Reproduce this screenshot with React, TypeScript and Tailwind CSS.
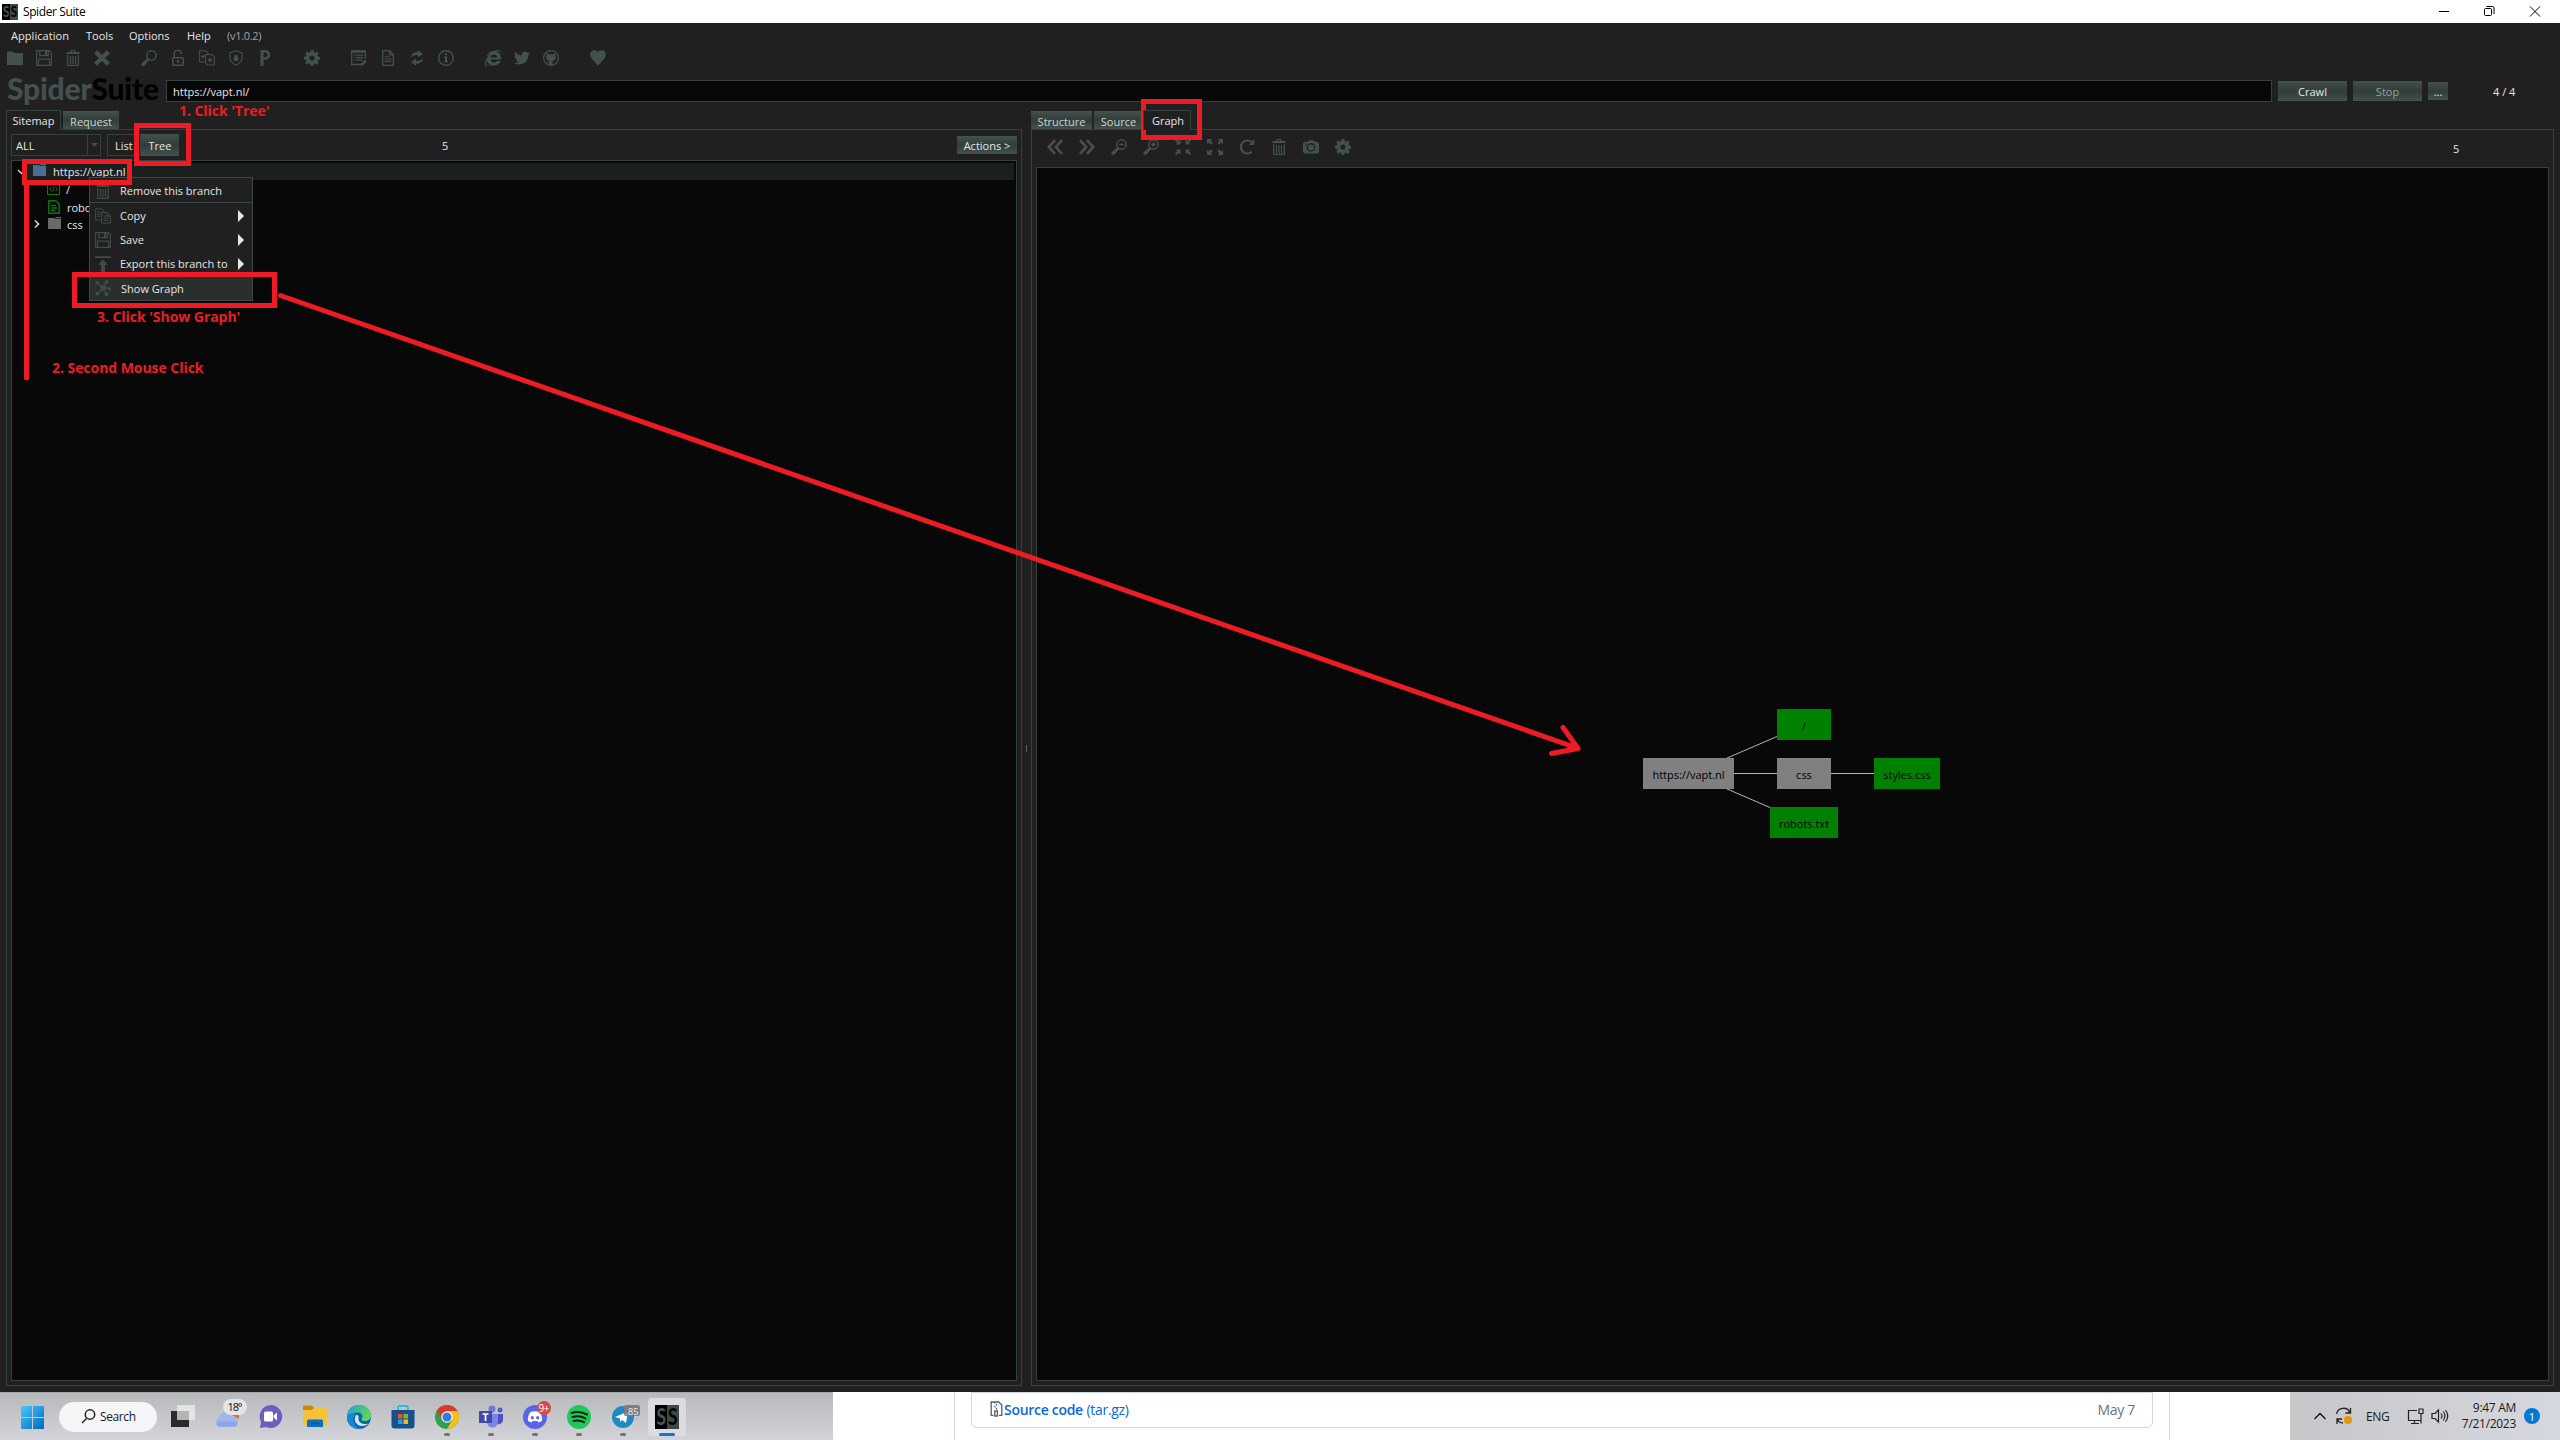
import React from "react";
import { FaInternetExplorer, FaTwitter } from "react-icons/fa";

type Kids = { children?: React.ReactNode };

function I({ children, s = 16, vb = "0 0 16 16", c = "" }: Kids & { s?: number; vb?: string; c?: string }) {
  return (
    <svg width={s} height={s} viewBox={vb} className={`block shrink-0 ${c}`} fill="currentColor">
      {children}
    </svg>
  );
}

const Folder = () => <I><path d="M0 1.500h6l1 1.500h9v12H0z" /></I>;
const Save = () => (
  <I>
    <path d="M.6.6h12.900l1.900 1.900v12.900H.6zM3.800.6v5h8.500v-5M2.500 15.400V9.200h11v6.200" fill="none" stroke="currentColor" strokeWidth="1.200" />
    <path d="M9 1h2.300v4H9z" />
  </I>
);
const Trash = () => (
  <I>
    <path fillRule="evenodd" d="M5 2l1-2h4l1 2h3.500v2h-13V2zM6.300 2h3.400l-.5-1H6.800z" />
    <path d="M2.700 5v10.400h10.600V5M5.500 6v8M8 6v8M10.500 6v8" fill="none" stroke="currentColor" strokeWidth="1.200" />
  </I>
);
const Cross = () => <I><path d="M3.200.3 8 5l4.800-4.700L16 3.200 11 8l5 4.800-3.200 3L8 11l-4.800 4.800L0 12.800 5 8 0 3.200z" /></I>;
const Zoomer = ({ k = "" }: { k?: string }) => (
  <I>
    <circle cx="10.500" cy="5.500" r="4.700" fill="none" stroke="currentColor" strokeWidth="1.400" />
    <path d="M6.500 8 0 14l1.500 2 2-.5L8.500 9.800z" />
    {k !== "" && <path d="M8.200 5.500h4.600" stroke="currentColor" strokeWidth="1.600" />}
    {k === "+" && <path d="M10.500 3.200v4.600" stroke="currentColor" strokeWidth="1.600" />}
  </I>
);
const Lock = () => (
  <I>
    <path d="M4.200 7.500V4a3.600 3.600 0 0 1 7.200-.3" fill="none" stroke="currentColor" strokeWidth="1.700" />
    <rect x="2.800" y="7.700" width="10.400" height="7.500" rx="1" fill="none" stroke="currentColor" strokeWidth="1.600" />
    <rect x="7" y="10" width="2" height="3" />
  </I>
);
const CopyPlus = () => (
  <I>
    <path d="M5.500 12H.6V.8h6.200L9 3.200v2M6.500 4.500V13l2 2h6.900V7l-2.600-2.500z" fill="none" stroke="currentColor" strokeWidth="1.100" />
    <path d="M2.200 6.500h3.500M4 4.700v3.600M8.800 10h4.400M11 7.800v4.400" stroke="currentColor" strokeWidth="1.300" />
  </I>
);
const CopyDoc = () => (
  <I>
    <path d="M5.500 12H.6V.8h6.200L9 3.200v2M6.500 4.500V15h8.900V7.500l-2.600-3zM2.200 4h3M2.200 6.200h3M2.200 8.400h3M8.500 8h3M8.500 10.200h5M8.500 12.400h5M12 4.500V8h3" fill="none" stroke="currentColor" strokeWidth="1" />
  </I>
);
const Shield = () => (
  <I>
    <path d="M8 .8 14 3v4.500c0 3.500-2.500 6-6 7.700-3.500-1.700-6-4.200-6-7.700V3z" fill="none" stroke="currentColor" strokeWidth="1.200" />
    <path d="M5.800 7h4.400v4H5.800zM6.300 7V5.500q1.700-2 3.400 0V7z" />
  </I>
);
const PIcon = () => <I><path fillRule="evenodd" d="M3.500 0h5a4.700 4.700 0 0 1 0 9.700h-2V16h-3zM6.500 2.500v4.700h1.800a2.300 2.300 0 0 0 0-4.700z" /></I>;
const Gear = () => (
  <I>
    <path fillRule="evenodd" d="M6.600 0h2.800l.4 2.200 1.300.5L12.900 1.400l1.800 1.900-1.200 1.800.5 1.300 2 .4v2.600l-2.100.5-.5 1.200 1.200 1.800-1.900 1.900-1.800-1.200-1.300.5L9.400 16H6.600l-.4-2-1.300-.5-1.800 1.200-1.900-1.900 1.200-1.800-.5-1.200L0 9.400V6.700l2-.4.5-1.300L1.300 3.300l1.900-1.900 1.700 1.300 1.300-.5zM8 5.400a2.600 2.600 0 1 0 0 5.200 2.600 2.600 0 0 0 0-5.200z" />
  </I>
);
const ListEdit = () => (
  <I>
    <path d="M10 14.500H.7V.8h13.600v8" fill="none" stroke="currentColor" strokeWidth="1.300" />
    <path d="M.5.5h14v2.200H.5zM2.800 4.500H4v1.200H2.800zM5 4.500h7.500v1.200H5zM2.800 7H4v1.200H2.800zM5 7h7.500v1.200H5zM2.800 9.500H4v1.200H2.800zM5 9.500h6v1.200H5zM9.500 15.700l.6-2.400 3.800-3.800 2 2-3.900 3.700z" />
  </I>
);
const Doc = () => (
  <I>
    <path d="M2.700.7h7L13.400 4.600v10.700H2.700zM9.500.8v4h4" fill="none" stroke="currentColor" strokeWidth="1.300" strokeLinejoin="round" />
    <path d="M4.500 6.700h5M4.500 9h7M4.500 11.400h7" stroke="currentColor" strokeWidth="1.100" />
  </I>
);
const Swap = () => (
  <I>
    <path d="M2 7.500C2.200 4 5 2 9 2.300V.2l5 3.700-5 3.300V5.200C6 4.700 4 5.500 2 7.500zM14 8.500c-.2 3.500-3 5.500-7 5.200v2.100l-5-3.700 5-3.300v2c3 .5 5-.3 7-2.300z" />
  </I>
);
const Info = () => (
  <I>
    <circle cx="8" cy="8" r="7.300" fill="none" stroke="currentColor" strokeWidth="1.400" />
    <path d="M7 3.200h2v2H7zM6 6.500h3V11h1v1.300H6V11h1V7.800H6z" />
  </I>
);
const Github = () => (
  <I>
    <circle cx="8" cy="8" r="7.400" fill="none" stroke="currentColor" strokeWidth="1.200" />
    <path d="M3.800 3.200 6 4.300h4l2.200-1.100.4 2.500c1 3-.5 4.700-3 5v4.200H6.200v-2c-1.700.2-2-1.300-2.900-1.700 1.400-.2 1.500 1 2.900.7l.1-1.200C3.900 10.400 2.500 8.700 3.400 5.700z" />
  </I>
);
const Heart = () => <I><path d="M8 2.300C9-.3 13.300-.7 15 1.900c1.600 2.400.8 5-1.300 7.400L8 15.800 2.300 9.300C.2 6.900-.6 4.300 1 1.900 2.700-.7 7-.3 8 2.300z" /></I>;
const Chev = ({ flip = false }) => (
  <I c={flip ? "rotate-180" : ""}>
    <path d="M8 1.200 1.800 8 8 14.800M15 1.200 8.800 8l6.200 6.800" fill="none" stroke="currentColor" strokeWidth="2.600" />
  </I>
);
const Shrink = () => <I><path d="M5.500.5v5h-5l1.700-1.700L0 1.700 1.700 0l2.100 2.200zM10.500.5v5h5l-1.700-1.700L16 1.700 14.300 0l-2.100 2.200zM5.500 15.500v-5h-5l1.700 1.700L0 14.300 1.700 16l2.100-2.200zM10.500 15.500v-5h5l-1.700 1.700 2.200 2.100-1.700 1.700-2.100-2.200z" /></I>;
const Expand = () => <I><path d="M0 0h5.300L3.600 1.700l2.200 2.200-1.900 1.900-2.200-2.200L0 5.300zM16 0h-5.300l1.700 1.700-2.200 2.200 1.900 1.900 2.200-2.200L16 5.300zM0 16h5.300l-1.700-1.700 2.200-2.200-1.900-1.900-2.200 2.200L0 10.700zM16 16h-5.300l1.700-1.700-2.200-2.200 1.900-1.900 2.200 2.200 1.700-1.700z" /></I>;
const Reload = () => (
  <I>
    <path d="M12.800 12.700A6.500 6.500 0 1 1 12.500 3" fill="none" stroke="currentColor" strokeWidth="2.200" />
    <path d="M15.300.3v5.700H9.500z" />
  </I>
);
const Camera = () => (
  <I>
    <path fillRule="evenodd" d="M1.500 3h3L6 1.200h4.500L12 3h2.500L16 4.500V13l-1.500 1.500h-13L0 13V4.500zM8 4a4.400 4.400 0 1 0 0 8.800A4.400 4.400 0 0 0 8 4zM2 4.500v1.300h1.500V4.500z" />
    <circle cx="8" cy="8.400" r="3" />
  </I>
);
const ExportUp = () => <I><path d="M0 .2h16v1.800H0zM8 3.500l5 5.300h-3V16H6V8.800H3z" /></I>;
const GraphI = () => (
  <I>
    <path d="M8 8 2.500 3M8 8l3-6M8 8H15M8 8l-5 5.500M8 8l4 6" stroke="currentColor" strokeWidth="1.200" />
    <circle cx="8" cy="8" r="3" /><circle cx="2.200" cy="2.600" r="1.900" /><circle cx="11.500" cy="2" r="1.900" />
    <circle cx="14.300" cy="9" r="1.700" /><circle cx="2.400" cy="13.500" r="1.900" /><circle cx="11.500" cy="14" r="2" />
  </I>
);

const grad = "bg-linear-to-b from-[#44524e] via-[#303d39] to-[#44524e]";

function SSLogo({ s }: { s: number }) {
  return (
    <svg width={s} height={s} viewBox="0 0 24 24" className="block shrink-0 overflow-visible">
      <path d="M0 0h12v24H0z" fill="#000" />
      <path d="M12 0h12v24H12z" fill="#3c4846" />
      <text x="6.300" y="20" textAnchor="middle" fontFamily="Lato" fontWeight="700" fontSize="22" textLength="9.500" lengthAdjust="spacingAndGlyphs" fill="#4a5754">S</text>
      <text x="17.700" y="20" textAnchor="middle" fontFamily="Lato" fontWeight="700" fontSize="22" textLength="9.500" lengthAdjust="spacingAndGlyphs" fill="#000">S</text>
    </svg>
  );
}

function TitleBar() {
  return (
    <div className="flex h-[23px] items-center bg-white pl-[2px] text-black">
      <SSLogo s={16} />
      <span className="ml-[5px] flex-1 text-[12px] tracking-[-0.400px]">Spider Suite</span>
      <svg width="110" height="20" viewBox="0 0 110 20" fill="none" stroke="#000" className="mr-[12px]">
        <path d="M1 9.500h10" />
        <rect x="46.500" y="6.500" width="7" height="7" rx="1" />
        <path d="M48.500 4.500h6q1.500 0 1.500 1.500v6" />
        <path d="M92 4.500l10 10M102 4.500l-10 10" />
      </svg>
    </div>
  );
}

function MenuRow() {
  return (
    <div className="flex h-[27px] items-center pb-[2px] pl-[11px] text-[#e6e6e6]">
      <span className="w-[75px] tracking-[0.050px]">Application</span>
      <span className="w-[43px]">Tools</span>
      <span className="w-[58px]">Options</span>
      <span className="w-[40px]">Help</span>
      <span className="text-[#a0a4a8] tracking-[-0.300px]">(v1.0.2)</span>
    </div>
  );
}

function Toolbar() {
  return (
    <div className="flex h-4 gap-[31px] pl-[7px] text-[#43514e]">
      <div className="flex gap-[13px]"><Folder /><Save /><Trash /><Cross /></div>
      <div className="flex gap-[13px]"><Zoomer /><Lock /><CopyPlus /><Shield /><PIcon /></div>
      <Gear />
      <div className="flex gap-[13px]"><ListEdit /><Doc /><Swap /><Info /></div>
      <div className="flex gap-[13px]"><FaInternetExplorer size={16} /><FaTwitter size={16} /><Github /></div>
      <Heart />
    </div>
  );
}

function UrlRow() {
  return (
    <div className="mt-[6px] flex h-[38px] items-center pl-[7px]">
      <div className="h-[38px] w-[159px] whitespace-nowrap font-['Lato'] text-[30px] font-black leading-[33px] tracking-[-0.200px] text-[#43504d]">
        Spider<span className="text-black">Suite</span>
      </div>
      <div className="flex h-[22px] w-[2106px] items-center border border-[#34413e] bg-[#080808] pl-[6px]">https://vapt.nl/</div>
      <div className={`ml-[6px] flex h-5 w-[69px] items-center justify-center ${grad}`}>Crawl</div>
      <div className={`ml-[6px] flex h-5 w-[69px] items-center justify-center text-[#96a09e] ${grad}`}>Stop</div>
      <div className={`ml-[6px] flex h-[18px] w-5 items-center justify-center ${grad}`}>...</div>
      <span className="ml-[45px]">4 / 4</span>
    </div>
  );
}

function Tab({ children, on = false, c }: Kids & { on?: boolean; c: string }) {
  return on ? (
    <div className={`relative z-10 flex h-[20px] items-center justify-center border border-b-0 border-[#34413e] bg-[#202020] ${c}`}>{children}</div>
  ) : (
    <div className={`flex h-[18px] items-center justify-center pt-[2px] text-[#d0d4d3] ${grad} ${c}`}>{children}</div>
  );
}

function LeftPane() {
  return (
    <section className="ml-[6px] flex w-[1016px] flex-col">
      <div className="flex h-[19px] items-end">
        <Tab on c="-mb-px w-[55px]">Sitemap</Tab>
        <Tab c="ml-[2px] w-[56px]">Request</Tab>
      </div>
      <div className="flex flex-1 flex-col border border-[#34413e] px-1 pb-1 pt-1">
        <div className="flex h-[22px] items-center">
          <div className="flex h-[22px] w-[90px] border border-[#34413e]">
            <span className="flex flex-1 items-center pl-1">ALL</span>
            <span className="flex w-[13px] items-center justify-center border-l border-[#34413e]">
              <svg width="7" height="4"><path d="M0 0h7L3.500 4z" fill="#3c4c5c" /></svg>
            </span>
          </div>
          <div className="ml-[6px] flex h-[22px] w-[34px] items-center border border-[#34413e] pl-[7px]">List</div>
          <div className={`flex h-[22px] w-[38px] items-center justify-center ${grad}`}>Tree</div>
          <span className="ml-[263px] flex-1">5</span>
          <div className={`flex h-[18px] w-[60px] items-center justify-center ${grad}`}>Actions &gt;</div>
        </div>
        <div className="mt-1 flex-1 border border-[#34413e] bg-[#080808] p-[2px]">
          <div className="flex h-[17px] items-center">
            <svg width="14" height="17" className="shrink-0"><path d="M4 7l3.500 3.500L11 7" fill="none" stroke="#ddd" strokeWidth="1.300" /></svg>
            <div className="flex h-[17px] flex-1 items-center bg-[#1b1f1e] pl-[5px]">
              <svg width="14" height="12" className="-mt-[3px]"><path d="M0 1h6l1.500 1H13v10H0z" fill="#4b6f93" /><path d="M7 0h6v1.300H8z" fill="#4b6f93" /></svg>
              <span className="ml-[6px] tracking-[0.030px]">https://vapt.nl</span>
            </div>
          </div>
          <div className="flex h-[18px] items-center pl-[33px]">
            <svg width="13" height="12" fill="none" stroke="#0a7a0a"><path d="M.5.5h12v11H.5zM4.500 4 2.500 6l2 2M8.500 4l2 2-2 2M7.200 3.500 5.800 8.500" /></svg>
            <span className="ml-[6px]">/</span>
          </div>
          <div className="flex h-[18px] items-center pl-[34px]">
            <svg width="12" height="14" fill="none" stroke="#067806" strokeWidth="1.500"><path d="M.8.8h7L11.200 4v9.200H.8z" /><path d="M3 5.500h5M3 8h6M3 10.500h4" /></svg>
            <span className="ml-[7px]">robots.txt</span>
          </div>
          <div className="flex h-[16px] items-center pl-[19px]">
            <svg width="8" height="10"><path d="M2 1.500 5.500 5 2 8.500" fill="none" stroke="#ddd" strokeWidth="1.500" /></svg>
            <svg width="14" height="12" className="-mt-[2px] ml-[7px]"><path d="M0 1h6l1.500 1H13v10H0z" fill="#6a6a6a" /><path d="M7 0h6v1.300H8z" fill="#6a6a6a" /></svg>
            <span className="ml-[5px]">css</span>
          </div>
        </div>
      </div>
    </section>
  );
}

function Node({ children, c }: Kids & { c: string }) {
  return <div className={`absolute flex h-[31px] items-center justify-center whitespace-nowrap pt-px text-black ${c}`}>{children}</div>;
}

function RightPane() {
  return (
    <section className="flex w-[1523px] flex-col">
      <div className="flex h-[19px] items-end">
        <Tab c="w-[61px]">Structure</Tab>
        <Tab c="ml-[2px] w-[49px]">Source</Tab>
        <Tab on c="-mb-px w-[48px] pl-[2px]">Graph</Tab>
      </div>
      <div className="flex flex-1 flex-col border border-[#34413e] p-1">
        <div className="flex h-[33px] items-start pl-[11px] text-[#43514e]">
          <div className="flex gap-4 pt-[5px]">
            <Chev /><Chev flip /><Zoomer k="-" /><Zoomer k="+" /><Shrink /><Expand /><Reload /><Trash /><Camera /><Gear />
          </div>
          <span className="ml-[1102px] pt-[9px] text-[#e6e6e6]">5</span>
        </div>
        <div className="relative flex-1 border border-[#34413e] bg-[#080808]">
          <svg width="400" height="200" className="absolute left-[563px] top-[512px]" fill="none" stroke="#b4b4b4">
            <path d="M126 78.500 177 56.500M134 93.500h43M231 93.500h43M126 108.500 170 127.500" />
          </svg>
          <Node c="left-[606px] top-[590px] w-[91px] bg-[#808080]">https://vapt.nl</Node>
          <Node c="left-[740px] top-[541px] w-[54px] bg-[#008000]">/</Node>
          <Node c="left-[740px] top-[590px] w-[54px] bg-[#808080]">css</Node>
          <Node c="left-[837px] top-[590px] w-[66px] bg-[#008000]">styles.css</Node>
          <Node c="left-[733px] top-[639px] w-[68px] bg-[#008000]">robots.txt</Node>
        </div>
      </div>
    </section>
  );
}

function MenuItem({ icon, children, sub = false, c }: Kids & { icon: React.ReactNode; sub?: boolean; c: string }) {
  return (
    <div className={`flex items-center pl-[5px] pr-[8px] ${c}`}>
      <span className="text-[#3f4c49]">{icon}</span>
      <span className="ml-[9px] flex-1 whitespace-nowrap">{children}</span>
      {sub && <svg width="6" height="12"><path d="M0 0l6 6-6 6z" fill="#e6e6e6" /></svg>}
    </div>
  );
}

function ContextMenu() {
  return (
    <div className="absolute left-[89px] top-[177px] w-[164px] border border-[#3a4744] bg-[#202020]">
      <MenuItem c="h-[25px] border-b border-[#3a4744] pt-[1px]" icon={<Trash />}>Remove this branch</MenuItem>
      <MenuItem c="h-[25px]" sub icon={<CopyDoc />}>Copy</MenuItem>
      <MenuItem c="h-[23px]" sub icon={<Save />}>Save</MenuItem>
      <MenuItem c="h-[25px]" sub icon={<ExportUp />}>Export this branch to</MenuItem>
      <MenuItem c="h-[24px] bg-[#2a2f2e] [&>span:last-child]:pl-px" icon={<GraphI />}>Show Graph</MenuItem>
    </div>
  );
}

function Notes() {
  const t = "absolute whitespace-nowrap font-['Open_Sans'] text-[14px] font-bold leading-[18px] text-[#ed1c24]";
  return (
    <>
      <svg width="2560" height="1392" className="pointer-events-none absolute left-0 top-0" fill="none" stroke="#ed1c24" strokeWidth="5">
        <path d="M136.500 125.500h52v38h-52zM24.500 161.500h105v21h-105zM74.500 274.500h200v31h-200zM1143.500 101.500h56v36h-56z" />
        <path d="M26.500 182V378M280.500 295.500 1577 748M1563 727.500l15 21L1551.500 753.500" strokeLinecap="round" strokeLinejoin="round" />
      </svg>
      <div className={`${t} left-[179px] top-[102px] tracking-[-0.050px]`}>1. Click 'Tree'</div>
      <div className={`${t} left-[97px] top-[308px] tracking-[-0.050px]`}>3. Click 'Show Graph'</div>
      <div className={`${t} left-[52px] top-[359px] tracking-[-0.050px]`}>2. Second Mouse Click</div>
    </>
  );
}

function App24({ children, dot = false }: Kids & { dot?: boolean }) {
  return (
    <div className="relative h-12 w-6 shrink-0">
      <svg width="34" height="48" viewBox="0 0 34 48" className="block overflow-visible">
        <g transform="translate(0 12)">{children}</g>
        {dot && <rect x="9" y="40" width="6" height="3" rx="1.500" fill="#757578" />}
      </svg>
    </div>
  );
}

function Taskbar() {
  return (
    <div className="flex h-12 bg-white">
      <div className="flex h-12 w-[833px] items-center border-t border-[#a9a9ab] bg-linear-to-b from-[#b8b9bb] to-[#d3d4d9] pl-[21px]">
        <svg width="23" height="23" className="mt-px shrink-0">
          <defs><linearGradient id="w" x1="0" y1="0" x2="1" y2="1"><stop offset="0" stopColor="#4cc8fb" /><stop offset="1" stopColor="#0067c5" /></linearGradient></defs>
          <path d="M0 1q0-1 1-1h10v11H0zM12 0h10q1 0 1 1v10H12zM0 12h11v11H1q-1 0-1-1zM12 12h11v10q0 1-1 1H12z" fill="url(#w)" />
        </svg>
        <div className="ml-[15px] mr-[14px] flex h-[30px] w-[98px] shrink-0 items-center rounded-full bg-[#f4f5f7] pl-[22px] text-[#1b1b1b]">
          <svg width="15" height="15" fill="none" stroke="#222" strokeWidth="1.500"><circle cx="9" cy="5.500" r="4.700" /><path d="M5.500 9.500 1 14" /></svg>
          <span className="ml-[4px] text-[12px] tracking-[-0.400px]">Search</span>
        </div>
        <div className="flex gap-5">
          <App24>
            <path d="M0 6h18v16H0z" fill="#2a2a2a" /><path d="M6 0h18v15H6z" fill="#e9e9ea" fillOpacity=".85" /><path d="M6 6h12v9H6z" fill="#b4b4b4" />
          </App24>
          <App24>
            <path d="M17 10l7-1v5z" fill="#e06c1f" />
            <path d="M5 22a5 5 0 0 1-1-9.500 6.500 6.500 0 0 1 12.500-1A5.300 5.300 0 0 1 19 22z" fill="#9db7ee" />
            <path d="M4 21.500c-3-1-3-4 0-5h16c3 1 3 4 0 5z" fill="#7f9be0" opacity=".6" />
            <rect x="8" y="-6" width="24" height="16" rx="8" fill="#e3e4e6" />
            <text x="12.500" y="5.500" fontFamily="Open Sans" fontSize="11" fill="#111" textLength="15">18°</text>
          </App24>
          <App24>
            <path d="M12 0a11.500 11.500 0 1 1-5 22l-6 1 1-6A11.500 11.500 0 0 1 12 0z" fill="#6a5fc1" />
            <rect x="5" y="6.500" width="9" height="10" rx="1.500" fill="#fff" /><path d="M14.500 10.500l3.500-3v8l-3.500-3z" fill="#fff" />
          </App24>
          <App24>
            <path d="M0 2q0-1.500 1.500-1.500H9l2 2.500h11.500Q24 3 24 4.500V21H0z" fill="#f5c33b" /><path d="M0 5V1.500Q0 .5 1.500.5H9L11 3 9 5z" fill="#c98a0c" />
            <path d="M4 22v-6q0-1.500 1.500-1.500h13q1.500 0 1.500 1.500v6z" fill="#0d6fc0" /><path d="M8 18.500h8" stroke="#0a4f90" strokeWidth="1.500" />
          </App24>
          <App24>
            <defs>
              <linearGradient id="e" x1="0" y1="0" x2="1" y2="0.300"><stop offset="0" stopColor="#1f9fdc" /><stop offset="1" stopColor="#5fd65a" /></linearGradient>
            </defs>
            <circle cx="12" cy="12" r="12" fill="#0c63ad" />
            <path d="M0 12C0 3 7-.5 12.500 0 20 .3 24 6 24 10.500c0 4-3 5.500-6 5.500-3.500 0-4-1.500-3-3 1.500-3-1-5.500-4-5.500C6 7.500 2 9 0 12z" fill="url(#e)" />
            <path d="M9 10c-3 5 0 11 6 11 3 0 5-1 6.500-2.500C18 20 11 19 11.500 13c0-2 .5-3-2.500-3z" fill="#cfe6f5" />
            <path d="M9 9C4 13 6 22 14 23.800 6 25-1 19 0 11.500 2 8 7 7.500 9 9z" fill="#1787d2" />
          </App24>
          <App24>
            <path d="M7 6V2.500Q7 1 8.500 1h7Q17 1 17 2.500V6" fill="none" stroke="#35b6e8" strokeWidth="1.800" />
            <path d="M.5 5h23v15.500q0 3-3 3h-17q-3 0-3-3z" fill="#16518c" />
            <path d="M7 9h4.500v4.500H7z" fill="#f04f24" /><path d="M12.500 9H17v4.500h-4.500z" fill="#7fb72a" /><path d="M7 14.500h4.500V19H7z" fill="#21a1ea" /><path d="M12.500 14.500H17V19h-4.500z" fill="#fbb914" />
          </App24>
          <App24 dot>
            <circle cx="12" cy="12" r="12" fill="#2fa04f" />
            <path d="M1.600 6A12 12 0 0 1 22.400 6H12L7 14z" fill="#d93a2e" />
            <path d="M22.400 6A12 12 0 0 1 12 24l5.200-9L12 6z" fill="#f6bf1b" />
            <circle cx="12" cy="12" r="5.700" fill="#fff" /><circle cx="12" cy="12" r="4.500" fill="#3478e0" />
          </App24>
          <App24 dot>
            <circle cx="13" cy="4" r="3.500" fill="#6f78d8" /><circle cx="21" cy="5" r="2.500" fill="#5059c9" />
            <path d="M17 9h7v6a4.500 4.500 0 0 1-7 3.500z" fill="#4a52bd" /><path d="M8 9h11v8a5.500 5.500 0 0 1-11 0z" fill="#7b83eb" />
            <path d="M0 6h13v12H0z" fill="#4048a8" />
            <path d="M3.500 9h6M6.500 9v7" stroke="#fff" strokeWidth="1.700" />
          </App24>
          <App24 dot>
            <circle cx="12" cy="12" r="12" fill="#5865e8" />
            <path fillRule="evenodd" d="M7.500 7q4.500-1.500 9 0c2 2.500 3 6 2.500 9l-3.500 1.500-1-1.500h-5l-1 1.500L5 16c-.5-3 .5-6.500 2.500-9zM9.300 11a1.600 1.700 0 1 0 0 3.400 1.600 1.700 0 0 0 0-3.400zM14.700 11a1.600 1.700 0 1 0 0 3.400 1.600 1.700 0 0 0 0-3.400z" fill="#fff" />
            <circle cx="21" cy="3" r="7" fill="#d9464a" />
            <text x="15.500" y="6.500" fontFamily="Open Sans" fontSize="10" fill="#fff" textLength="11">9+</text>
          </App24>
          <App24 dot>
            <circle cx="12" cy="12" r="12" fill="#1ec95a" />
            <path d="M4.500 8q8-2.500 15.500 1.500M5.500 12q7-2 13 1.500M6.500 16q5.500-1.500 10.500 1.200" fill="none" stroke="#0b1f12" strokeWidth="2" strokeLinecap="round" />
          </App24>
          <App24 dot>
            <circle cx="12" cy="12" r="11" fill="#2089c4" />
            <path d="M4 12l13-5.500L15 18l-4-3-2 2v-3.500z" fill="#fff" />
            <rect x="13" y="0" width="16" height="11" rx="2" fill="#7c7f80" />
            <text x="14.500" y="9.500" fontFamily="Open Sans" fontSize="9" fill="#eee" textLength="13">.85</text>
          </App24>
          <div className="relative -ml-[7px] flex h-[38px] w-[38px] justify-center self-center rounded bg-[#dcdce0] pt-[7px]">
            <SSLogo s={24} />
            <span className="absolute bottom-0 left-[11px] h-[3px] w-4 rounded-full bg-[#0a78d4]" />
          </div>
        </div>
      </div>
      <div className="w-[121px]" />
      <div className="flex w-[1216px] border-x border-[#d0d7de] pl-4">
        <div className="flex h-[36px] w-[1182px] items-center rounded-b-md border border-[#d0d7de] pl-[18px] pr-[17px]">
          <svg width="13" height="16" className="-mt-[2px]" fill="none" stroke="#57606a" strokeWidth="1.300"><path d="M3.500 14.300H1.200V1h7.500L11.800 4v10.300H9M5 1v1.500M6.500 3v1.500M5 5v1.500M6.500 7v1.500M4.800 10h2.600v5H4.800z" /></svg>
          <span className="ml-px flex-1 text-[14px] text-[#0969da]"><span className="font-semibold tracking-[-0.300px]">Source code</span> <span className="tracking-[-0.300px]">(tar.gz)</span></span>
          <span className="text-[14px] tracking-[-0.300px] text-[#6a737c]">May 7</span>
        </div>
      </div>
      <div className="w-[120px]" />
      <div className="relative flex flex-1 items-center bg-linear-to-r from-[#c5c7c9] to-[#d6d8e0] pl-[24px] text-[#1b1b1b]">
        <svg width="12" height="8" fill="none" stroke="#111" strokeWidth="1.300"><path d="M.5 7 6 1.500 11.500 7" /></svg>
        <svg width="18" height="18" className="ml-[9px]" fill="none" stroke="#222" strokeWidth="1.300">
          <path d="M1.500 7A7 7 0 0 1 15 6M15.500 1v5h-5M2 17v-5h5M2 12q2 4 6 4" /><circle cx="13" cy="13" r="4" fill="#e8930c" stroke="none" />
        </svg>
        <span className="ml-[13px] w-[41px] pt-[2px] text-[12px] tracking-[-0.300px]">ENG</span>
        <svg width="17" height="17" fill="none" stroke="#222" strokeWidth="1.200"><path d="M10 2.500H1.500v10H14V9M4 15.500h8M7.500 12.500v3M12 1h4v4.500h-4zM14 5.500v10" /></svg>
        <svg width="18" height="16" className="ml-[7px]" fill="none" stroke="#222" strokeWidth="1.200"><path d="M1 5.500h3L7.500 2v12L4 10.500H1zM10 5.500q2 2.500 0 5M12.200 3.500q3.500 4.500 0 9M14.500 2q4.500 6 0 12" /></svg>
        <div className="ml-[11px] w-[56px] text-right text-[12px] leading-[16px] tracking-[-0.300px]">9:47 AM<br />7/21/2023</div>
        <span className="ml-[8px] flex size-4 items-center justify-center rounded-full bg-[#0078d4] text-[11px] text-white">1</span>
      </div>
    </div>
  );
}

export default function App() {
  return (
    <div className="relative flex h-[1440px] w-[2560px] flex-col overflow-hidden bg-[#202020] font-['Open_Sans','Noto_Sans',sans-serif] text-[11px] leading-none text-[#e6e6e6]">
      <TitleBar />
      <MenuRow />
      <Toolbar />
      <UrlRow />
      <main className="flex h-[1282px] pb-[6px]">
        <LeftPane />
        <div className="flex w-[9px] items-center justify-center"><span className="h-[7px] w-px bg-[#52605c]" /></div>
        <RightPane />
      </main>
      <Taskbar />
      <ContextMenu />
      <Notes />
    </div>
  );
}
